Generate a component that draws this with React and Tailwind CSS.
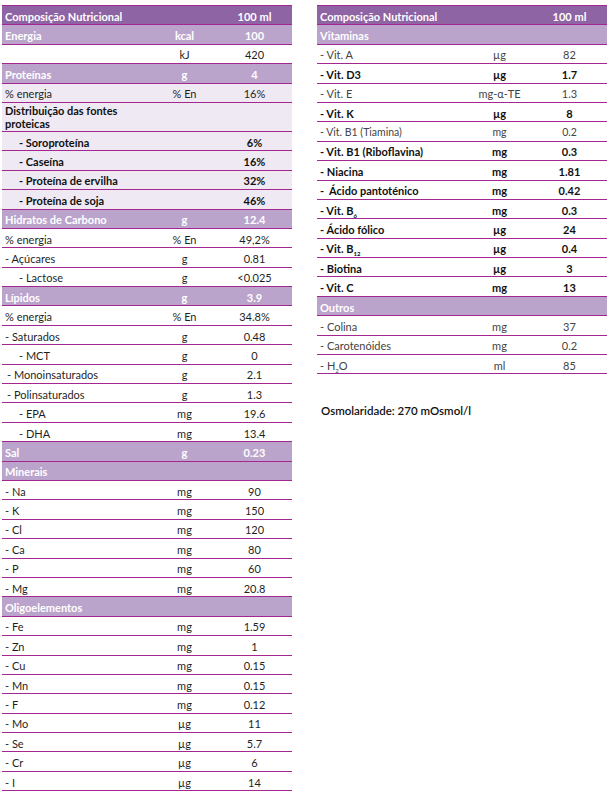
import React from "react";

const LEFT = [
  { t: "header", l: "Composição Nutricional", u: "", v: "100 ml" },
  { t: "section", l: "Energia", u: "kcal", v: "100" },
  { l: "", u: "kJ", v: "420" },
  { t: "section", l: "Proteínas", u: "g", v: "4" },
  { tint: true, l: "% energia", u: "% En", v: "16%" },
  { tint: true, bold: true, two: true, l: "Distribuição das fontes", l2: "proteicas", u: "", v: "" },
  { tint: true, bold: true, ind: 2, l: "- Soroproteína", u: "", v: "6%" },
  { tint: true, bold: true, ind: 2, l: "- Caseína", u: "", v: "16%" },
  { tint: true, bold: true, ind: 2, l: "- Proteína de ervilha", u: "", v: "32%" },
  { tint: true, bold: true, ind: 2, l: "- Proteína de soja", u: "", v: "46%" },
  { t: "section", l: "Hidratos de Carbono", u: "g", v: "12.4" },
  { l: "% energia", u: "% En", v: "49,2%" },
  { l: "- Açúcares", u: "g", v: "0.81" },
  { ind: 2, l: "- Lactose", u: "g", v: "<0.025" },
  { t: "section", l: "Lípidos", u: "g", v: "3.9" },
  { l: "% energia", u: "% En", v: "34.8%" },
  { l: "- Saturados", u: "g", v: "0.48" },
  { ind: 2, l: "- MCT", u: "g", v: "0" },
  { ind: 1, l: "- Monoinsaturados", u: "g", v: "2.1" },
  { ind: 1, l: "- Polinsaturados", u: "g", v: "1.3" },
  { ind: 2, l: "- EPA", u: "mg", v: "19.6" },
  { ind: 2, l: "- DHA", u: "mg", v: "13.4" },
  { t: "section", l: "Sal", u: "g", v: "0.23" },
  { t: "section", l: "Minerais", u: "", v: "" },
  { l: "- Na", u: "mg", v: "90" },
  { l: "- K", u: "mg", v: "150" },
  { l: "- Cl", u: "mg", v: "120" },
  { l: "- Ca", u: "mg", v: "80" },
  { l: "- P", u: "mg", v: "60" },
  { l: "- Mg", u: "mg", v: "20.8" },
  { t: "section", l: "Oligoelementos", u: "", v: "" },
  { l: "- Fe", u: "mg", v: "1.59" },
  { l: "- Zn", u: "mg", v: "1" },
  { l: "- Cu", u: "mg", v: "0.15" },
  { l: "- Mn", u: "mg", v: "0.15" },
  { l: "- F", u: "mg", v: "0.12" },
  { l: "- Mo", u: "µg", v: "11" },
  { l: "- Se", u: "µg", v: "5.7" },
  { l: "- Cr", u: "µg", v: "6" },
  { l: "- I", u: "µg", v: "14" },
];

const RIGHT = [
  { t: "header", l: "Composição Nutricional", u: "", v: "100 ml" },
  { t: "section", l: "Vitaminas", u: "", v: "" },
  { light: true, l: "- Vit. A", u: "µg", v: "82" },
  { bold: true, l: "- Vit. D3", u: "µg", v: "1.7" },
  { light: true, l: "- Vit. E", u: "mg-α-TE", v: "1.3" },
  { bold: true, l: "- Vit. K", u: "µg", v: "8" },
  { light: true, small: true, l: "- Vit. B1 (Tiamina)", u: "mg", v: "0.2" },
  { bold: true, l: "- Vit. B1 (Riboflavina)", u: "mg", v: "0.3" },
  { bold: true, l: "- Niacina", u: "mg", v: "1.81" },
  { bold: true, l: "-\u00a0 Ácido pantoténico", u: "mg", v: "0.42" },
  { bold: true, l: "- Vit. B", sub: "6", u: "mg", v: "0.3" },
  { bold: true, l: "- Ácido fólico", u: "µg", v: "24" },
  { bold: true, l: "- Vit. B", sub: "12", u: "µg", v: "0.4" },
  { bold: true, l: "- Biotina", u: "µg", v: "3" },
  { bold: true, l: "- Vit. C", u: "mg", v: "13" },
  { t: "section", l: "Outros", u: "", v: "" },
  { light: true, l: "- Colina", u: "mg", v: "37" },
  { light: true, l: "- Carotenóides", u: "mg", v: "0.2" },
  { light: true, l: "- H", sub: "2", after: "O", u: "ml", v: "85" },
];

function Row({ r }) {
  const isHeader = r.t === "header";
  const isSection = r.t === "section";
  let bg = "bg-white";
  if (isHeader) bg = "bg-[#8f64a5]";
  else if (isSection) bg = "bg-[#bba4cc]";
  else if (r.tint) bg = "bg-[#efe9f3]";

  let text = "text-[#1f1f1f] font-normal";
  if (isHeader || isSection) text = "text-white font-bold";
  else if (r.bold) text = "text-[#111] font-bold";
  else if (r.light) text = "text-[#444] font-normal";

  const pad = r.ind === 2 ? "pl-[17px]" : r.ind === 1 ? "pl-[5px]" : "pl-[3px]";
  const h = r.two ? "h-[29px]" : "h-[19.4px]";

  return (
    <div
      className={`grid grid-cols-[150px_65px_75px] items-center border-b border-[#a3278f] ${bg} ${text} ${h} ${r.small ? "text-[10.5px]" : "text-[11px]"}`}
    >
      <div className={`${pad} ${r.two ? "leading-[13px] pt-[1px]" : "leading-none pt-[2px]"} whitespace-nowrap`}>
        {r.l}
        {r.sub ? <sub className="text-[6px] align-baseline relative top-[3px]">{r.sub}</sub> : null}
        {r.after ? r.after : null}
        {r.two ? (
          <>
            <br />
            {r.l2}
          </>
        ) : null}
      </div>
      <div className="text-center leading-none pt-[2px] whitespace-nowrap">{r.u}</div>
      <div className="text-center leading-none pt-[2px] whitespace-nowrap">{r.v}</div>
    </div>
  );
}

function Table({ rows }) {
  return (
    <div className="w-[290px] border-t border-[#a3278f]">
      {rows.map((r, i) => (
        <Row key={i} r={r} />
      ))}
    </div>
  );
}

export default function App() {
  return (
    <div
      className="w-[611px] h-[798px] bg-white flex items-start gap-[25px] pl-[2px] pt-[5px]"
      style={{ fontFamily: "Lato, 'Open Sans', sans-serif" }}
    >
      <Table rows={LEFT} />
      <div className="flex flex-col">
        <Table rows={RIGHT} />
        <div className="mt-[28px] pl-[4px] text-[11.5px] font-semibold text-[#111]">
          Osmolaridade: 270 mOsmol/l
        </div>
      </div>
    </div>
  );
}
